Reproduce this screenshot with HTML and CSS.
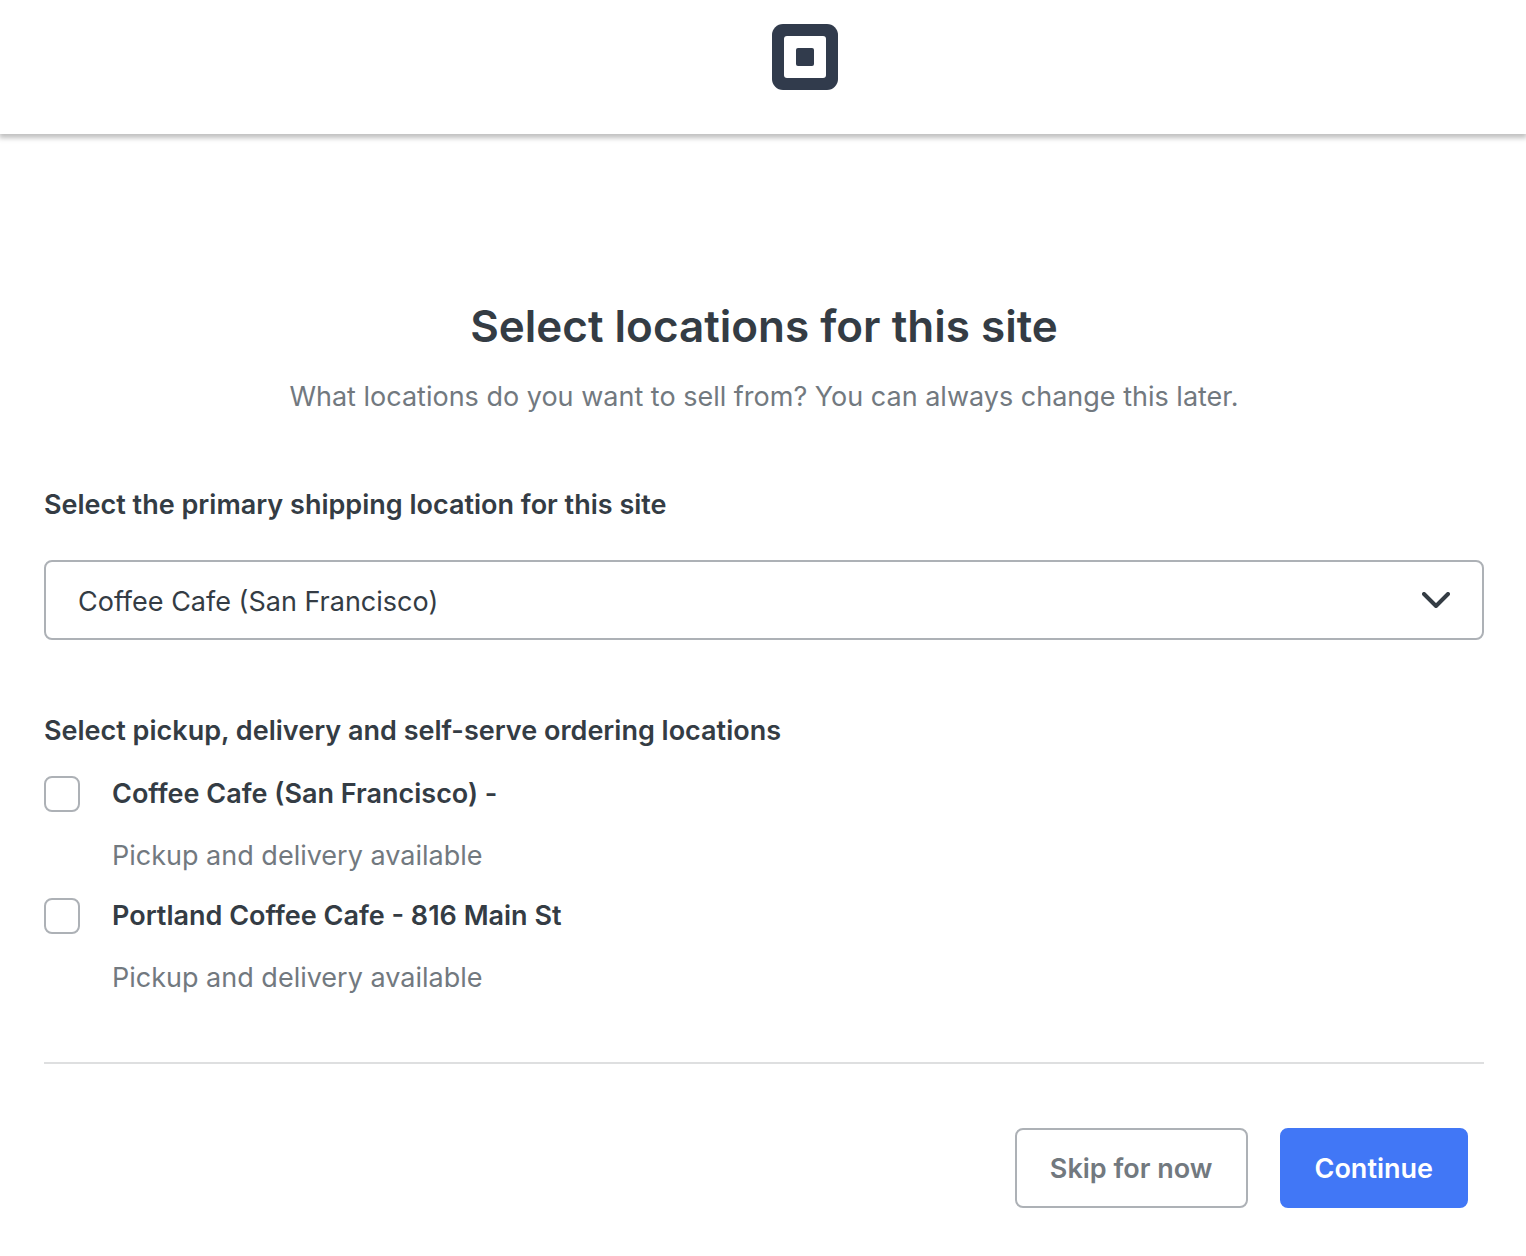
FILE: index.html
```html
<!DOCTYPE html>
<html lang="en">
<head>
<meta charset="utf-8">
<meta name="viewport" content="width=device-width, initial-scale=1">
<title>Select locations for this site</title>
<link rel="stylesheet" href="styles.css">
</head>
<body>
<header class="header">
  <svg class="logo" viewBox="0 0 66 66" role="img" aria-label="Square">
    <rect width="66" height="66" rx="11" fill="#313b4c"/>
    <rect x="12" y="12" width="42" height="42" rx="3" fill="#fff"/>
    <rect x="24" y="24" width="18" height="18" rx="2" fill="#313b4c"/>
  </svg>
</header>
<main class="main">
  <form class="form">
    <h1 class="title">Select locations for this site</h1>
    <p class="subtitle">What locations do you want to sell from? You can always change this later.</p>

    <label class="label" for="shipping">Select the primary shipping location for this site</label>
    <div class="select-wrap">
      <select class="select" id="shipping">
        <option>Coffee Cafe (San Francisco)</option>
        <option>Portland Coffee Cafe</option>
      </select>
      <svg class="chevron" viewBox="0 0 28 16" aria-hidden="true">
        <path d="M2 2 L14 14 L26 2" fill="none" stroke="#343c44" stroke-width="4" stroke-linecap="round" stroke-linejoin="round"/>
      </svg>
    </div>

    <fieldset class="locations">
      <legend class="label">Select pickup, delivery and self-serve ordering locations</legend>
      <div class="location">
        <input class="checkbox" type="checkbox" id="sf" aria-describedby="sf-note">
        <label class="location-name" for="sf">Coffee Cafe (San Francisco) -</label>
        <p class="note" id="sf-note">Pickup and delivery available</p>
      </div>
      <div class="location">
        <input class="checkbox" type="checkbox" id="portland" aria-describedby="portland-note">
        <label class="location-name" for="portland">Portland Coffee Cafe - 816 Main St</label>
        <p class="note" id="portland-note">Pickup and delivery available</p>
      </div>
    </fieldset>

    <div class="actions">
      <button class="button button-secondary" type="button">Skip for now</button>
      <button class="button button-primary" type="submit">Continue</button>
    </div>
  </form>
</main>
</body>
</html>
```
FILE: styles.css
```css
* {
  box-sizing: border-box;
}

body {
  margin: 0;
  background: #fff;
  color: #343c44;
  font: 400 27px/40px Inter, "Liberation Sans", sans-serif;
}

.header {
  display: flex;
  justify-content: center;
  padding: 24px 0 44px 84px;
  box-shadow: 0 3px 5px 1px rgba(0, 0, 0, 0.25);
}

.logo {
  width: 66px;
  height: 66px;
}

.main {
  padding: 164px 42px 48px 44px;
}

.title {
  margin: 0;
  font-size: 44px;
  font-weight: 600;
  line-height: 56px;
  text-align: center;
}

.subtitle {
  margin: 23px 0 68px;
  color: #72797f;
  text-align: center;
}

.label {
  display: block;
  padding: 0;
  font-weight: 600;
}

.select-wrap {
  position: relative;
  margin-top: 35px;
}

.select {
  display: block;
  width: 100%;
  height: 80px;
  padding: 4px 80px 0 32px;
  appearance: none;
  background: #fff;
  border: 2px solid #adb1b6;
  border-radius: 8px;
  color: inherit;
  font: inherit;
}

.chevron {
  position: absolute;
  top: 32px;
  right: 34px;
  width: 28px;
  height: 16px;
  pointer-events: none;
}

.locations {
  margin: 71px 0 0;
  padding: 3px 0 64px;
  border: 0;
  border-bottom: 2px solid #dedfe0;
}

.location {
  display: grid;
  grid-template-columns: 36px 1fr;
  column-gap: 32px;
  row-gap: 22px;
  align-items: center;
  margin-top: 20px;
}

.checkbox {
  width: 36px;
  height: 36px;
  margin: 0;
  appearance: none;
  background: #fff;
  border: 2px solid #adb1b6;
  border-radius: 8px;
}

.checkbox:checked {
  background: #4177f6;
  border-color: #4177f6;
}

.location-name {
  font-weight: 600;
}

.note {
  grid-column: 2;
  margin: 0;
  color: #72797f;
}

.actions {
  display: flex;
  justify-content: flex-end;
  gap: 32px;
  padding: 64px 16px 0 0;
}

.button {
  height: 80px;
  padding: 2px 33px 0;
  border: 2px solid #adb1b6;
  border-radius: 8px;
  font: inherit;
  font-weight: 600;
  cursor: pointer;
}

.button-secondary {
  background: #fff;
  color: #72797f;
}

.button-primary {
  background: #4177f6;
  border-color: #4177f6;
  color: #fff;
}
```
